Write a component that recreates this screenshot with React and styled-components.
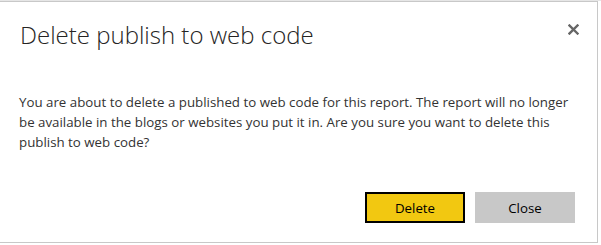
import React from "react";
import styled, { createGlobalStyle } from "styled-components";

const GlobalStyle = createGlobalStyle`
  html, body {
    margin: 0;
    padding: 0;
    background: #ffffff;
  }
  body {
    font-family: "Open Sans", "Noto Sans", "Liberation Sans", sans-serif;
  }
`;

const Page = styled.div`
  width: 601px;
  height: 245px;
  overflow: hidden;
  background: #ffffff;
  border-top: 1px solid #e6e6e6;
  box-sizing: border-box;
`;

const Dialog = styled.div`
  width: 598px;
  height: 242px;
  box-sizing: border-box;
  background: #ffffff;
  border-top: 1px solid #c8c8c8;
  border-right: 1px solid #c8c8c8;
  border-bottom: 1px solid #c8c8c8;
  display: flex;
  flex-direction: column;
`;

const Header = styled.div`
  display: flex;
  align-items: flex-start;
  justify-content: space-between;
  padding: 18px 18px 0 20px;
`;

const Title = styled.h1`
  margin: 0;
  font-size: 24px;
  font-weight: 300;
  color: #252423;
  line-height: 30px;
`;

const CloseIcon = styled.button`
  border: 0;
  background: none;
  padding: 0;
  margin-top: 4px;
  width: 11px;
  height: 11px;
  cursor: pointer;
  display: flex;
`;

const Body = styled.p`
  margin: 0;
  padding: 42px 19px 0 19px;
  font-size: 13.3px;
  line-height: 20px;
  color: #333333;
`;

const Footer = styled.div`
  margin-top: auto;
  display: flex;
  justify-content: flex-end;
  gap: 10px;
  padding: 0 22px 19px 0;
`;

const Button = styled.button`
  width: 100px;
  height: 31px;
  box-sizing: border-box;
  font-family: inherit;
  font-size: 13.3px;
  color: #000000;
  background: ${(p) => (p.$primary ? "#f2c811" : "#c8c8c8")};
  border: ${(p) => (p.$primary ? "2px solid #000000" : "none")};
  cursor: pointer;
`;

export default function App() {
  return (
    <>
      <GlobalStyle />
      <Page>
        <Dialog>
          <Header>
            <Title>Delete publish to web code</Title>
            <CloseIcon aria-label="Close">
              <svg width="11" height="11" viewBox="0 0 11 11">
                <path
                  d="M1.5 1.5 L9.5 9.5 M9.5 1.5 L1.5 9.5"
                  stroke="#666666"
                  strokeWidth="2.4"
                  strokeLinecap="square"
                />
              </svg>
            </CloseIcon>
          </Header>
          <Body>
            You are about to delete a published to web code for this report.
            The report will no longer be available in the blogs or websites you
            put it in. Are you sure you want to delete this publish to web code?
          </Body>
          <Footer>
            <Button $primary>Delete</Button>
            <Button>Close</Button>
          </Footer>
        </Dialog>
      </Page>
    </>
  );
}
